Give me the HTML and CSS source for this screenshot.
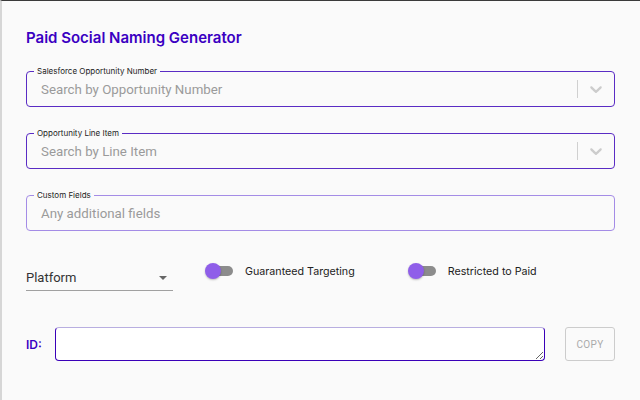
FILE: index.html
```html
<!DOCTYPE html>
<html>
<head>
<meta charset="utf-8">
<link rel="stylesheet" href="styles.css">
</head>
<body>
<div class="app">
  <h1 class="title">Paid Social Naming Generator</h1>
  <div class="fields">
    <div class="field">
      <span class="legend">Salesforce Opportunity Number</span>
      <span class="placeholder">Search by Opportunity Number</span>
      <span class="indicators">
        <span class="sep"></span>
        <svg class="chev" width="20" height="20" viewBox="0 0 20 20"><path d="M4.516 7.548c0.436-0.446 1.043-0.481 1.576 0l3.908 3.747 3.908-3.747c0.533-0.481 1.141-0.446 1.574 0 0.436 0.445 0.408 1.197 0 1.615-0.406 0.418-4.695 4.502-4.695 4.502-0.217 0.223-0.502 0.335-0.787 0.335s-0.57-0.112-0.789-0.335c0 0-4.287-4.084-4.695-4.502s-0.436-1.170 0-1.615z"/></svg>
      </span>
    </div>
    <div class="field">
      <span class="legend">Opportunity Line Item</span>
      <span class="placeholder">Search by Line Item</span>
      <span class="indicators">
        <span class="sep"></span>
        <svg class="chev" width="20" height="20" viewBox="0 0 20 20"><path d="M4.516 7.548c0.436-0.446 1.043-0.481 1.576 0l3.908 3.747 3.908-3.747c0.533-0.481 1.141-0.446 1.574 0 0.436 0.445 0.408 1.197 0 1.615-0.406 0.418-4.695 4.502-4.695 4.502-0.217 0.223-0.502 0.335-0.787 0.335s-0.57-0.112-0.789-0.335c0 0-4.287-4.084-4.695-4.502s-0.436-1.170 0-1.615z"/></svg>
      </span>
    </div>
    <div class="field light">
      <span class="legend">Custom Fields</span>
      <span class="placeholder">Any additional fields</span>
    </div>
  </div>
  <div class="options">
    <div class="select">
      <span>Platform</span>
      <span class="caret"></span>
    </div>
    <label class="switch">
      <span class="track"><span class="thumb"></span></span>
      <span class="switch-label">Guaranteed Targeting</span>
    </label>
    <label class="switch">
      <span class="track"><span class="thumb"></span></span>
      <span class="switch-label">Restricted to Paid</span>
    </label>
  </div>
  <div class="id-row">
    <span class="id-label">ID:</span>
    <textarea class="id-box"></textarea>
    <button class="copy" disabled>COPY</button>
  </div>
</div>
</body>
</html>
```
FILE: styles.css
```css
html, body {
  margin: 0;
  padding: 0;
}
body {
  background: #fafafa;
  border-top: 1px solid #3a3a3a;
  border-left: 2px solid #d6d6d6;
  width: 640px;
  height: 400px;
  box-sizing: border-box;
  overflow: hidden;
  font-family: Inter, "Liberation Sans", sans-serif;
}
.app {
  padding: 28px 25px 0 24px;
}
.title {
  margin: 0;
  font-size: 15px;
  line-height: 18px;
  font-weight: 600;
  color: #3a00c2;
}
.fields {
  display: flex;
  flex-direction: column;
  gap: 26px;
  margin-top: 24px;
}
.field {
  position: relative;
  height: 36px;
  box-sizing: border-box;
  border: 1px solid #5a2cc4;
  border-radius: 4px;
  display: flex;
  align-items: center;
  padding-left: 14px;
}
.field.light {
  border-color: #a48ce6;
}
.legend {
  position: absolute;
  top: -6px;
  left: 7px;
  padding: 0 3px;
  background: #fafafa;
  font-size: 8px;
  line-height: 10px;
  color: #222;
}
.placeholder {
  flex: 1;
  font-family: Roboto, "Liberation Sans", sans-serif;
  font-size: 13.3px;
  color: #9a9a9a;
}
.indicators {
  display: flex;
  align-items: center;
  align-self: stretch;
}
.sep {
  width: 1px;
  height: 18px;
  background: #d0d0d0;
}
.chev {
  padding: 0 8px;
  fill: #cccccc;
}
.options {
  display: flex;
  margin-top: 24px;
  height: 36px;
}
.select {
  align-self: flex-end;
  width: 147px;
  height: 26px;
  box-sizing: border-box;
  border-bottom: 1px solid #a0a0a0;
  display: flex;
  align-items: center;
  justify-content: space-between;
  padding-right: 6px;
  font-family: Roboto, "Liberation Sans", sans-serif;
  font-size: 13px;
  color: #333;
}
.caret {
  width: 0;
  height: 0;
  border-left: 4px solid transparent;
  border-right: 4px solid transparent;
  border-top: 4px solid #666;
  margin-top: 1px;
}
.switch {
  align-self: flex-start;
  height: 32px;
  display: flex;
  align-items: center;
  margin-left: 32px;
}
.switch + .switch {
  margin-left: 53px;
}
.track {
  position: relative;
  width: 25px;
  height: 10px;
  border-radius: 5px;
  background: #8c8c8c;
  margin-left: 3px;
}
.thumb {
  position: absolute;
  left: -3px;
  top: -3px;
  width: 16px;
  height: 16px;
  border-radius: 50%;
  background: #8f5ee9;
  box-shadow: 0 1px 2px rgba(0,0,0,0.25);
}
.switch-label {
  margin-left: 12px;
  font-size: 10.7px;
  color: #222;
}
.id-row {
  display: flex;
  align-items: center;
  margin-top: 36px;
}
.id-label {
  width: 29px;
  font-size: 12px;
  font-weight: 600;
  color: #3a00c2;
}
.id-box {
  width: 490px;
  height: 34px;
  box-sizing: border-box;
  margin: 0;
  border: 1px solid #3a00b8;
  border-top-color: #b8aee0;
  border-radius: 4px;
  background: #fff;
  resize: vertical;
  outline: none;
}
.copy {
  margin-left: 20px;
  width: 50px;
  height: 34px;
  box-sizing: border-box;
  border: 1px solid #cccccc;
  border-radius: 3px;
  background: transparent;
  font-family: Roboto, "Liberation Sans", sans-serif;
  font-size: 10px;
  color: #aaaaaa;
  letter-spacing: 0.3px;
  padding: 0;
}
```
